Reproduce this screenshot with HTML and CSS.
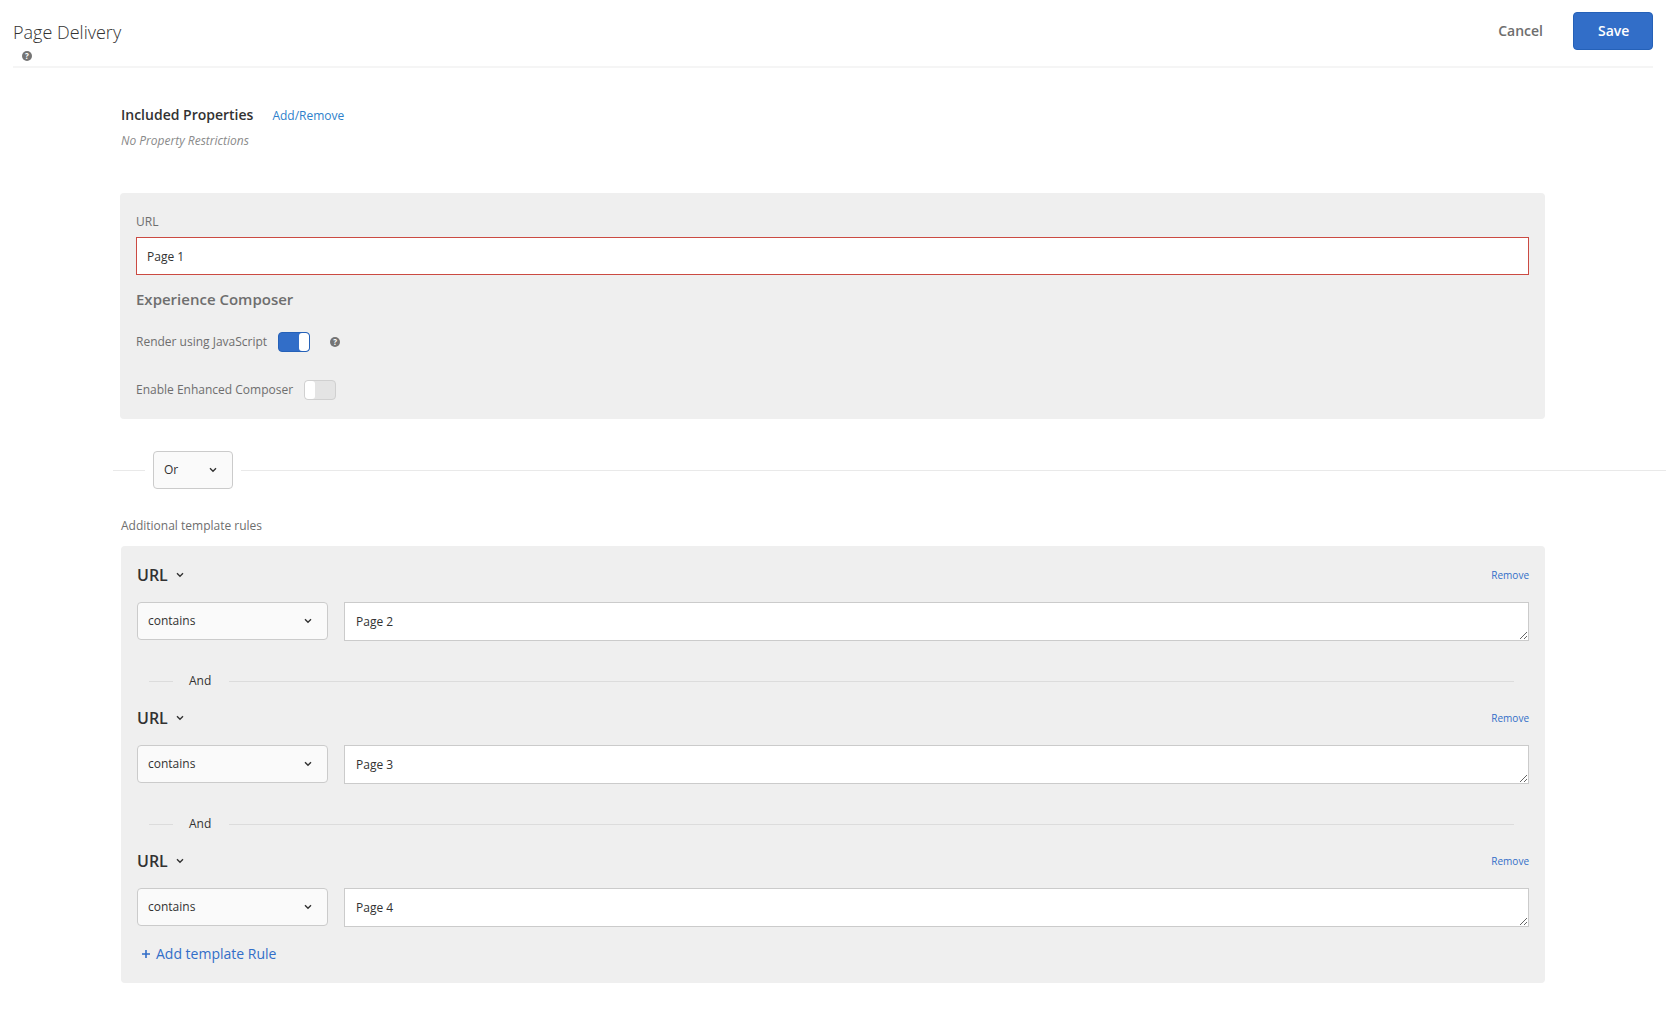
FILE: index.html
```html
<!DOCTYPE html>
<html lang="en">
<head>
<meta charset="utf-8">
<meta name="viewport" content="width=device-width, initial-scale=1">
<title>Page Delivery</title>
<link rel="stylesheet" href="styles.css">
</head>
<body>
<svg class="sprite" aria-hidden="true">
  <symbol id="chevron" viewBox="0 0 8 6"><path d="M1 1.2 L4 4.2 L7 1.2" fill="none" stroke="currentColor" stroke-width="1.4"/></symbol>
</svg>

<header class="topbar">
  <div class="topbar-heading">
    <h1 class="title">Page Delivery</h1>
    <button class="help" type="button" aria-label="Help">?</button>
  </div>
  <div class="topbar-actions">
    <button class="button button-quiet" type="button">Cancel</button>
    <button class="button button-primary" type="button">Save</button>
  </div>
</header>

<main class="content">
  <section class="properties">
    <div class="properties-heading">
      <h2 class="section-title">Included Properties</h2>
      <a class="link" href="#">Add/Remove</a>
    </div>
    <p class="note">No Property Restrictions</p>
  </section>

  <section class="panel page-panel">
    <label class="label" for="page-url">URL</label>
    <input class="field field-invalid" id="page-url" type="text" value="Page 1">
    <h2 class="composer-title">Experience Composer</h2>
    <div class="toggle-row">
      <label class="label" for="render-js">Render using JavaScript</label>
      <input class="switch" id="render-js" type="checkbox" role="switch" checked>
      <button class="help" type="button" aria-label="Help">?</button>
    </div>
    <div class="toggle-row">
      <label class="label" for="enhanced">Enable Enhanced Composer</label>
      <input class="switch" id="enhanced" type="checkbox" role="switch">
    </div>
  </section>

  <div class="joiner">
    <div class="picker">
      <select class="picker-select" aria-label="Combine with"><option>Or</option><option>And</option></select>
      <svg class="chevron"><use href="#chevron"/></svg>
    </div>
  </div>

  <h2 class="rules-title">Additional template rules</h2>

  <section class="panel rules-panel">
    <div class="rule">
      <div class="rule-head">
        <button class="rule-type" type="button">URL <svg class="chevron"><use href="#chevron"/></svg></button>
        <a class="remove" href="#">Remove</a>
      </div>
      <div class="rule-body">
        <div class="picker">
          <select class="picker-select" aria-label="Condition"><option>contains</option><option>equals</option></select>
          <svg class="chevron"><use href="#chevron"/></svg>
        </div>
        <textarea class="field" rows="1" aria-label="Value">Page 2</textarea>
      </div>
    </div>
    <div class="and">And</div>
    <div class="rule">
      <div class="rule-head">
        <button class="rule-type" type="button">URL <svg class="chevron"><use href="#chevron"/></svg></button>
        <a class="remove" href="#">Remove</a>
      </div>
      <div class="rule-body">
        <div class="picker">
          <select class="picker-select" aria-label="Condition"><option>contains</option><option>equals</option></select>
          <svg class="chevron"><use href="#chevron"/></svg>
        </div>
        <textarea class="field" rows="1" aria-label="Value">Page 3</textarea>
      </div>
    </div>
    <div class="and">And</div>
    <div class="rule">
      <div class="rule-head">
        <button class="rule-type" type="button">URL <svg class="chevron"><use href="#chevron"/></svg></button>
        <a class="remove" href="#">Remove</a>
      </div>
      <div class="rule-body">
        <div class="picker">
          <select class="picker-select" aria-label="Condition"><option>contains</option><option>equals</option></select>
          <svg class="chevron"><use href="#chevron"/></svg>
        </div>
        <textarea class="field" rows="1" aria-label="Value">Page 4</textarea>
      </div>
    </div>
    <button class="add-rule" type="button">
      <svg class="plus" viewBox="0 0 8 8"><path d="M4 0v8M0 4h8" stroke="currentColor" stroke-width="1.6"/></svg>
      Add template Rule
    </button>
  </section>
</main>
</body>
</html>
```
FILE: styles.css
```css
* { box-sizing: border-box; }

body {
  margin: 0;
  background: #fff;
  color: #323232;
  font: 12px/20px "Open Sans", "Noto Sans", sans-serif;
}

h1, h2, p { margin: 0; }

button, input, select, textarea {
  margin: 0;
  font: inherit;
  color: inherit;
}

button {
  padding: 0;
  border: 0;
  background: none;
  cursor: pointer;
}

a { text-decoration: none; }

.sprite { display: none; }

.chevron {
  width: 8px;
  height: 6px;
  color: #323232;
}

/* Top bar */
.topbar {
  display: flex;
  justify-content: space-between;
  margin: 0 13px;
  padding-top: 12px;
  height: 68px;
  border-bottom: 2px solid #f5f5f5;
}

.topbar-heading {
  display: flex;
  flex-direction: column;
  align-items: flex-start;
  padding-top: 6px;
}

.topbar-heading .help { margin: 5px 0 0 9px; }

.title {
  font-size: 18px;
  font-weight: 300;
  line-height: 28px;
  color: #323232;
}

.help {
  width: 10px;
  height: 10px;
  border-radius: 50%;
  background: #747474;
  color: #fff;
  font-size: 8px;
  font-weight: 700;
  line-height: 10px;
  text-align: center;
}

.topbar-actions {
  display: flex;
  gap: 6px;
}

.button {
  height: 38px;
  padding: 0 24px;
  border-radius: 4px;
  font-size: 14px;
  font-weight: 600;
}

.button-quiet { color: #6e6e6e; }

.button-primary {
  width: 80px;
  border: 1px solid #2561b8;
  background: #326ec8;
  color: #fff;
}

/* Content */
.content {
  padding: 35px 0 38px 120px;
}

.content > section { margin-right: 121px; }

.properties { padding-left: 1px; }

.properties-heading {
  display: flex;
  align-items: baseline;
  gap: 19px;
}

.section-title {
  font-size: 14px;
  font-weight: 600;
  line-height: 24px;
}

.link { color: #2e7fcb; }

.note {
  padding-top: 4px;
  color: #8a8a8a;
  font-style: italic;
}

.panel {
  border-radius: 4px;
  background: #efefef;
}

.page-panel {
  margin-top: 42px;
  padding: 18px 16px 19px;
}

.label {
  display: block;
  color: #6e6e6e;
}

.page-panel > .label { padding: 1px 0 5px; }

.field {
  display: block;
  width: 100%;
  height: 38px;
  padding: 9px 11px;
  border: 1px solid #cbcbcb;
  border-radius: 0;
  background: #fff;
  outline: 0;
}

.field-invalid {
  padding: 8px 10px;
  border-color: #cb4a42;
}

.composer-title {
  padding-top: 12px;
  color: #6e6e6e;
  font-size: 15px;
  font-weight: 600;
  line-height: 24px;
}

.toggle-row {
  display: flex;
  align-items: center;
  gap: 11px;
  height: 20px;
  margin-top: 21px;
}

.toggle-row + .toggle-row { margin-top: 28px; }

.toggle-row .help { margin-left: 9px; }

.switch {
  appearance: none;
  display: flex;
  width: 32px;
  height: 20px;
  border: 1px solid #d0d0d0;
  border-radius: 4px;
  background: #e4e4e4;
  overflow: hidden;
}

.switch::before {
  content: "";
  width: 10px;
  border-radius: 3px;
  background: #fff;
}

.switch:checked {
  justify-content: flex-end;
  border-color: #2561b8;
  background: #326ec8;
}

/* Operator between the page and the additional rules */
.joiner {
  display: flex;
  align-items: center;
  gap: 8px;
  margin: 32px 0 0 -7px;
}

.joiner::before,
.joiner::after {
  content: "";
  width: 32px;
  border-top: 1px solid #e9e9e9;
}

.joiner::after {
  flex: 1;
}

.joiner .picker { width: 80px; }

.picker {
  display: grid;
  align-items: center;
}

.picker > * { grid-area: 1 / 1; }

.picker-select {
  appearance: none;
  width: 100%;
  height: 38px;
  padding: 0 32px 0 10px;
  border: 1px solid #cbcbcb;
  border-radius: 4px;
  background: #fafafa;
}

.picker .chevron {
  justify-self: end;
  margin-right: 16px;
  pointer-events: none;
}

.rules-title {
  padding-left: 1px;
  margin-top: 27px;
  color: #6e6e6e;
  font-size: 12px;
  font-weight: 400;
}

.rules-panel {
  margin-top: 10px;
  margin-left: 1px;
  padding: 17px 16px;
}

.rule-head {
  display: flex;
  justify-content: space-between;
  align-items: center;
  height: 24px;
}

.rule-type {
  display: flex;
  align-items: center;
  gap: 8px;
  font-size: 16px;
  font-weight: 600;
}

.remove {
  color: #326ec8;
  font-size: 10px;
}

.rule-body {
  display: grid;
  grid-template-columns: 191px 1fr;
  align-items: start;
  gap: 16px;
  margin-top: 15px;
}

.rule-body .field { height: 39px; }

.and {
  display: flex;
  align-items: center;
  margin: 30px 15px 15px 12px;
}

.and::before,
.and::after {
  content: "";
  border-top: 1px solid #dcdcdc;
}

.and::before {
  width: 24px;
  margin-right: 16px;
}

.and::after {
  flex: 1;
  margin-left: 18px;
}

.add-rule {
  display: flex;
  align-items: center;
  gap: 6px;
  margin: 15px 0 0 5px;
  color: #326ec8;
  font-size: 14px;
  line-height: 24px;
}

.plus {
  width: 8px;
  height: 8px;
}
```
